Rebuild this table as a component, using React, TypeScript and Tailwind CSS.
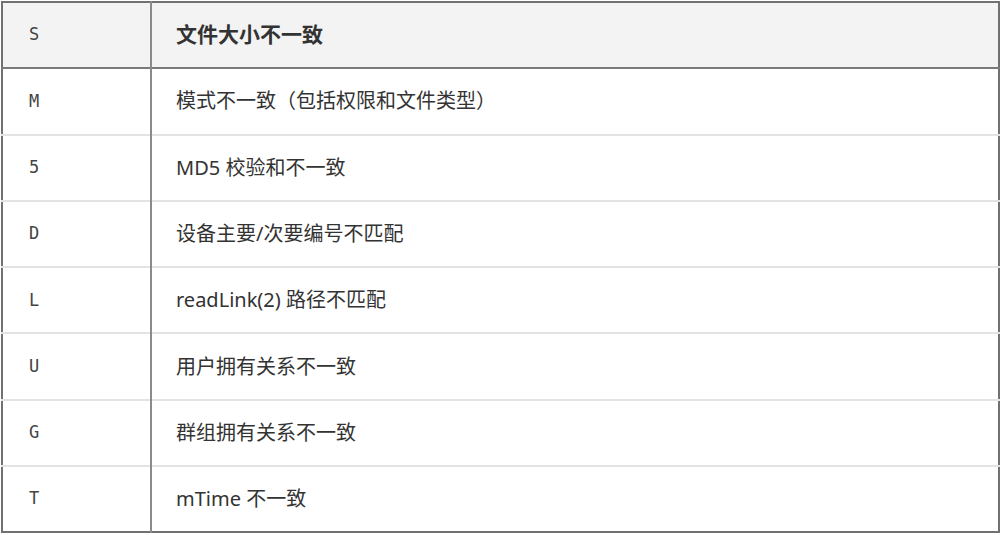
const rows: [string, string][] = [
  ['M', '模式不一致（包括权限和文件类型）'],
  ['5', 'MD5 校验和不一致'],
  ['D', '设备主要/次要编号不匹配'],
  ['L', 'readLink(2) 路径不匹配'],
  ['U', '用户拥有关系不一致'],
  ['G', '群组拥有关系不一致'],
  ['T', 'mTime 不一致'],
];

const mono = "font-['DejaVu_Sans_Mono',monospace]";
const sans = "font-['Noto_Sans','Noto_Sans_CJK_SC',sans-serif]";

export default function App() {
  return (
    <div className="w-[1002px] h-[535px] bg-white pl-px pt-px">
      <table className="w-[999px] border-collapse border-2 border-[#717171] text-[#333]">
        <thead>
          <tr className="h-[66.3px] bg-[#f3f3f3] border-b-2 border-[#7a7a7a]">
            <th className={`w-[149px] text-left font-normal pl-[26px] text-[17px] text-[#444] border-r-2 border-[#8a8a8a] ${mono}`}>S</th>
            <th className={`text-left font-bold pl-[24px] text-[21px] ${sans}`}>文件大小不一致</th>
          </tr>
        </thead>
        <tbody>
          {rows.map(([k, v], i) => (
            <tr key={k} className={`h-[66.3px] ${i < rows.length - 1 ? 'border-b-2 border-[#e3e3e3]' : ''}`}>
              <td className={`pl-[26px] text-[17px] text-[#444] border-r-2 border-[#8a8a8a] ${mono}`}>{k}</td>
              <td className={`pl-[24px] text-[20px] ${sans}`}>{v}</td>
            </tr>
          ))}
        </tbody>
      </table>
    </div>
  );
}
